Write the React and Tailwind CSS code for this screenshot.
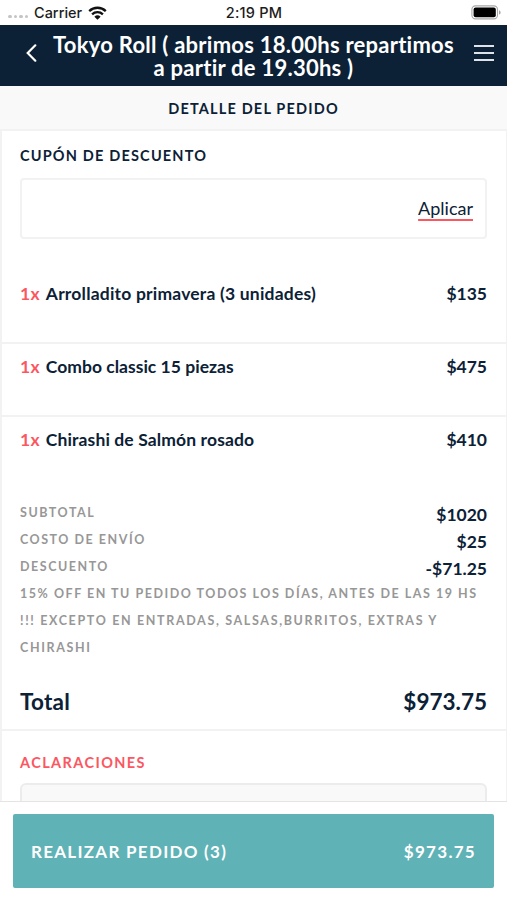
import { useState } from "react";

const ITEMS = [
  { id: 1, qty: 1, name: "Arrolladito primavera (3 unidades)", price: "$135", tracking: "tracking-[0.2px]" },
  { id: 2, qty: 1, name: "Combo classic 15 piezas", price: "$475", tracking: "tracking-[0.02px]" },
  { id: 3, qty: 1, name: "Chirashi de Salmón rosado", price: "$410", tracking: "tracking-[0.12px]" },
];

const SUMMARY = [
  { label: "Subtotal", value: "$1020" },
  { label: "Costo de envío", value: "$25" },
  { label: "Descuento", value: "-$71.25" },
];

function StatusBar() {
  return (
    <div className="grid h-[25px] shrink-0 grid-cols-3 items-center bg-white pr-[6px] pl-2 font-['Inter',sans-serif] text-[14.5px] leading-5 font-medium text-[#1c1c1c]">
      <div className="flex items-center">
        <div className="mt-2 flex gap-[2px]">
          <span className="h-[3.5px] w-[3.5px] rounded-full bg-[#c4c4c4]" />
          <span className="h-[3.5px] w-[3.5px] rounded-full bg-[#c4c4c4]" />
          <span className="h-[3.5px] w-[3.5px] rounded-full bg-[#c4c4c4]" />
          <span className="h-[3.5px] w-[3.5px] rounded-full bg-[#c4c4c4]" />
        </div>
        <span className="ml-[6px]">Carrier</span>
        <svg className="ml-[6px] h-[14px] w-[19px]" viewBox="0 0 19 14" fill="none">
          <path d="M1.2 5.1a12 12 0 0 1 16.6 0" stroke="#111" strokeWidth="2.3" />
          <path d="M4.1 8.3a7.8 7.8 0 0 1 10.8 0" stroke="#111" strokeWidth="2.3" />
          <path d="M9.5 13.8 6.4 10.7a4.5 4.5 0 0 1 6.2 0z" fill="#111" />
        </svg>
      </div>
      <div className="pr-[1px] text-center tracking-[0.2px]">2:19 PM</div>
      <svg className="h-[15px] w-[30px] justify-self-end" viewBox="0 0 30 15" fill="none">
        <rect x="0.9" y="0.9" width="25.6" height="13" rx="3.6" stroke="#a8a8a8" strokeWidth="1.1" />
        <rect x="2.6" y="2.6" width="22.2" height="9.6" rx="2" fill="#000" />
        <path d="M28 5.2c1.2.5 1.6 1.2 1.6 2.2s-.4 1.7-1.6 2.2z" fill="#a8a8a8" />
      </svg>
    </div>
  );
}

function Header() {
  return (
    <header className="flex h-[61px] shrink-0 items-center bg-[#0c2136] text-white">
      <button type="button" className="flex w-[46px] justify-center pl-[17px]" aria-label="Volver">
        <svg className="mt-[-5px] h-[18px] w-[11px]" viewBox="0 0 11 18" fill="none">
          <path d="M9.3 1.3 1.7 9l7.6 7.7" stroke="#fff" strokeWidth="2.2" strokeLinecap="round" />
        </svg>
      </button>
      <h1 className="flex-1 text-center text-[22px] leading-[23px] font-bold tracking-[0.25px] whitespace-nowrap">
        Tokyo Roll ( abrimos 18.00hs repartimos
        <br />a partir de 19.30hs )
      </h1>
      <button type="button" className="flex w-[46px] flex-col items-center gap-[5px] pb-[6px]" aria-label="Menú">
        <span className="h-[2px] w-5 bg-[#dfe3e7]" />
        <span className="h-[2px] w-5 bg-[#dfe3e7]" />
        <span className="h-[2px] w-5 bg-[#dfe3e7]" />
      </button>
    </header>
  );
}

function ItemRow({ item }) {
  return (
    <li className="flex h-[73px] items-start justify-between border-b-2 border-[#f2f2f2] pt-[11px] pr-[19px] pl-[18px] text-[17.5px] leading-6 font-bold last:border-b-0">
      <span className={item.tracking}>
        <span className="mr-[6px] tracking-[0.25px] text-[#fc5661]">{item.qty}x</span>
        {item.name}
      </span>
      <span>{item.price}</span>
    </li>
  );
}

export default function App() {
  const [coupon, setCoupon] = useState("");
  const [notes, setNotes] = useState("");

  return (
    <div className="flex h-[900px] w-[507px] flex-col overflow-hidden bg-white font-['Lato',sans-serif] text-[#0c2136]">
      <StatusBar />
      <Header />

      <h2 className="h-[43px] shrink-0 bg-[#f9f9f9] text-center text-[14.5px] leading-[45px] font-bold tracking-[1.18px] uppercase">
        Detalle del pedido
      </h2>

      <main className="min-h-0 flex-1 overflow-hidden border-t-2 border-r border-l-2 border-[#f2f2f2]">
        <section className="pt-[14px] pr-[19px] pl-[18px]">
          <h3 className="text-[14.5px] leading-[22px] font-bold tracking-[1.18px] uppercase">
            Cupón de descuento
          </h3>
          <div className="mt-[11px] flex h-[61px] items-center rounded-[4px] border-2 border-[#f2f2f2] px-3">
            <input
              value={coupon}
              onChange={(e) => setCoupon(e.target.value)}
              className="min-w-0 flex-1 outline-none"
            />
            <button
              type="button"
              className="pb-[2px] text-[18px] leading-5 underline decoration-[#fc5661] decoration-[1.5px] underline-offset-[4px] [text-decoration-skip-ink:none]"
            >
              Aplicar
            </button>
          </div>
        </section>

        <ul className="mt-8">
          {ITEMS.map((item) => (
            <ItemRow key={item.id} item={item} />
          ))}
        </ul>

        <section className="border-b-2 border-[#f2f2f2] pt-[10px] pr-[19px] pb-3 pl-[18px]">
          {SUMMARY.map((row) => (
            <div key={row.label} className="flex h-[27px] items-center justify-between">
              <span className="pb-[1px] text-[12.5px] leading-5 font-bold tracking-[1.53px] text-[#979797] uppercase">
                {row.label}
              </span>
              <span className="pt-[3px] text-[17.5px] leading-6 font-bold">{row.value}</span>
            </div>
          ))}
          <p className="-mt-px text-[12.5px] leading-[27px] font-bold tracking-[1.65px] whitespace-nowrap text-[#979797] uppercase">
            <span className="tracking-[1.53px]">15% off en tu pedido todos los días, antes de las 19 hs</span>
            <br />
            !!! Excepto en entradas, salsas,burritos, extras y
            <br />
            chirashi
          </p>
          <div className="mt-[26px] flex items-center justify-between text-[22.5px] leading-[30px] font-bold">
            <span className="tracking-[0.25px]">Total</span>
            <span>$973.75</span>
          </div>
        </section>

        <section className="pt-[21px] pr-[19px] pl-[18px]">
          <h3 className="text-[14.5px] leading-[22px] font-bold tracking-[1.4px] text-[#fc5661] uppercase">
            Aclaraciones
          </h3>
          <textarea
            value={notes}
            onChange={(e) => setNotes(e.target.value)}
            className="mt-[9px] block h-20 w-full resize-none rounded-[6px] border-2 border-[#ececec] bg-[#f9f9f9] outline-none"
          />
        </section>
      </main>

      <footer className="h-[99px] shrink-0 border-t border-[#e4e4e4] bg-white px-[13px] pt-3">
        <button
          type="button"
          className="flex h-[74px] w-full items-center justify-between rounded-[2px] bg-[#5fb2b6] px-[18px] pt-[1px] text-[17px] font-bold tracking-[1.28px] text-white uppercase"
        >
          <span>Realizar pedido (3)</span>
          <span>$973.75</span>
        </button>
      </footer>
    </div>
  );
}
